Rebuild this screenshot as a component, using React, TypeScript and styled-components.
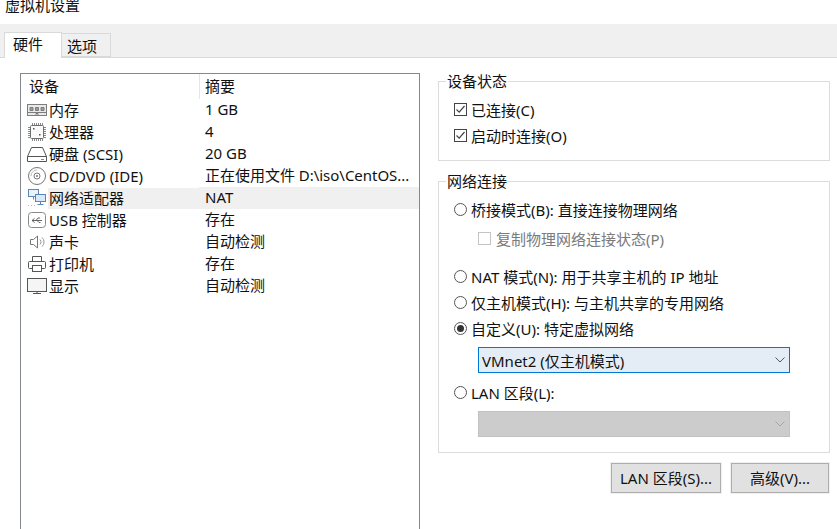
import styled, { createGlobalStyle } from 'styled-components';
import type { ReactNode } from 'react';

const GlobalStyle = createGlobalStyle`
  html, body {
    margin: 0;
    padding: 0;
    background: #fff;
  }
`;

const Page = styled.div`
  width: 837px;
  height: 529px;
  overflow: hidden;
  background: #fff;
  color: #111;
  font-family: 'Noto Sans', 'Noto Sans CJK SC', sans-serif;
  font-size: 15px;
`;

const TitleBar = styled.div`
  height: 24px;
  padding-left: 5px;
  line-height: 11px;
  overflow: hidden;
`;

const TabStrip = styled.div`
  height: 34px;
  background: #f0f0f0;
  border-bottom: 1px solid #d9d9d9;
  box-sizing: border-box;
  padding: 9px 0 0 4px;
  display: flex;
  align-items: flex-end;
`;

const Tab = styled.div<{ $active?: boolean }>`
  box-sizing: border-box;
  border: 1px solid #d9d9d9;
  width: ${({ $active }) => ($active ? '58px' : '50px')};
  height: ${({ $active }) => ($active ? '26px' : '24px')};
  padding-left: ${({ $active }) => ($active ? '8px' : '5px')};
  line-height: ${({ $active }) => ($active ? '23px' : '24px')};
  background: ${({ $active }) => ($active ? '#fff' : '#f0f0f0')};
  border-bottom: ${({ $active }) => ($active ? 'none' : '1px solid #d9d9d9')};
  margin-bottom: ${({ $active }) => ($active ? '-1px' : '0')};
  margin-left: ${({ $active }) => ($active ? '0' : '-1px')};
`;

const Body = styled.div`
  display: flex;
  padding: 15px 7px 0 20px;
  gap: 18px;
`;

const ListBox = styled.div`
  width: 400px;
  height: 480px;
  box-sizing: border-box;
  border: 1px solid #828790;
  flex-shrink: 0;
`;

const ListHead = styled.div`
  display: grid;
  grid-template-columns: 178px 1fr;
  height: 25px;
  line-height: 25px;
`;

const HeadCell = styled.div<{ $divider?: boolean }>`
  padding-left: ${({ $divider }) => ($divider ? '5px' : '8px')};
  border-left: ${({ $divider }) => ($divider ? '1px solid #e5e5e5' : 'none')};
`;

const Row = styled.div`
  display: grid;
  grid-template-columns: 178px 1fr;
  height: 22px;
  line-height: 21px;
`;

const DeviceCell = styled.div`
  display: flex;
  align-items: center;
  padding-left: 5px;
  white-space: nowrap;
`;

const DeviceName = styled.span<{ $selected?: boolean }>`
  flex: 1;
  padding-left: 1px;
  background: ${({ $selected }) => ($selected ? '#f0f0f0' : 'transparent')};
`;

const SummaryCell = styled.div<{ $selected?: boolean }>`
  padding-left: 6px;
  white-space: nowrap;
  letter-spacing: ${({ $selected }) => ($selected ? '0' : '-0.02px')};
  background: ${({ $selected }) => ($selected ? '#f0f0f0' : 'transparent')};
`;

const IconSlot = styled.svg`
  width: 22px;
  height: 20px;
  flex-shrink: 0;
`;

const Side = styled.div`
  width: 392px;
  display: flex;
  flex-direction: column;
`;

const Group = styled.fieldset<{ $height: number }>`
  margin: 0;
  padding: 0 0 0 15px;
  border: 1px solid #dcdcdc;
  height: ${({ $height }) => $height}px;
  box-sizing: border-box;
`;

const Legend = styled.legend`
  margin-left: -8px;
  padding: 0 1px;
  line-height: 20px;
  height: 20px;
`;

const StatusGroup = styled(Group)`
  margin-top: -2px;
`;

const NetworkGroup = styled(Group)`
  margin-top: 10px;
`;

const Option = styled.div<{ $disabled?: boolean; $indent?: boolean; $top?: number }>`
  display: flex;
  align-items: center;
  gap: ${({ $indent }) => ($indent ? '5px' : '4px')};
  height: 26px;
  margin-top: ${({ $top }) => $top ?? 0}px;
  margin-left: ${({ $indent }) => ($indent ? '24px' : '0')};
  color: ${({ $disabled }) => ($disabled ? '#7a7a7a' : '#111')};
  white-space: nowrap;
`;

const CheckBox = styled.span<{ $disabled?: boolean }>`
  width: 13px;
  height: 13px;
  box-sizing: border-box;
  border: 1px solid ${({ $disabled }) => ($disabled ? '#c4c4c4' : '#444')};
  display: flex;
  align-items: center;
  justify-content: center;
  flex-shrink: 0;
`;

const Radio = styled.span<{ $checked?: boolean }>`
  width: 13px;
  height: 13px;
  box-sizing: border-box;
  border: 1px solid #555;
  border-radius: 50%;
  display: flex;
  align-items: center;
  justify-content: center;
  flex-shrink: 0;
  &::after {
    content: '';
    display: ${({ $checked }) => ($checked ? 'block' : 'none')};
    width: 7px;
    height: 7px;
    border-radius: 50%;
    background: #333;
  }
`;

const Select = styled.div<{ $disabled?: boolean; $top: number }>`
  box-sizing: border-box;
  width: 312px;
  height: 26px;
  margin: ${({ $top }) => $top}px 0 0 24px;
  padding: 0 4px 0 3px;
  display: flex;
  align-items: center;
  justify-content: space-between;
  background: ${({ $disabled }) => ($disabled ? '#cccccc' : '#e4edf5')};
  border: 1px solid ${({ $disabled }) => ($disabled ? '#c2c2c2' : '#0078d7')};
`;

const Buttons = styled.div`
  display: flex;
  justify-content: flex-end;
  gap: 10px;
  margin-top: 10px;
  padding-right: 1px;
`;

const Button = styled.div<{ $width: number }>`
  box-sizing: border-box;
  width: ${({ $width }) => $width}px;
  height: 30px;
  line-height: 29px;
  text-align: center;
  white-space: nowrap;
  background: #e1e1e1;
  border: 1px solid #adadad;
  outline: 1px solid #f0f0f0;
`;

const Chevron = ({ color }: { color: string }) => (
  <svg width="10" height="6" viewBox="0 0 10 6" fill="none" stroke={color} strokeWidth="1">
    <path d="M0.5 0.5 L5 5 L9.5 0.5" />
  </svg>
);

const Tick = () => (
  <svg width="11" height="11" viewBox="0 0 11 11" fill="none" stroke="#444" strokeWidth="1.2">
    <path d="M1.5 5.5 L4.2 8.2 L9.5 2" />
  </svg>
);

const MemoryIcon = () => (
  <IconSlot viewBox="0 0 22 20" fill="none" stroke="#7d7d7d">
    <rect x="1.5" y="4.5" width="19" height="11" fill="#e9e9e9" />
    <path d="M4 7.5h3v3H4zM9.5 7.5h3v3h-3zM15 7.5h3v3h-3z" fill="#9a9a9a" />
    <path d="M1.5 12.5h19M10 15.5v-2h2v2" />
  </IconSlot>
);

const CpuIcon = () => (
  <IconSlot viewBox="0 0 22 20" fill="none" stroke="#6d6d6d">
    <rect x="4.5" y="3.5" width="13" height="13" rx="1" fill="#fafafa" />
    <path
      d="M6.5 1v2M8.5 1v2M10.5 1v2M12.5 1v2M14.5 1v2M16.5 1v2M6.5 17v2M8.5 17v2M10.5 17v2M12.5 17v2M14.5 17v2M16.5 17v2M2 5.5h2M2 7.5h2M2 9.5h2M2 11.5h2M2 13.5h2M2 15.5h2M18 5.5h2M18 7.5h2M18 9.5h2M18 11.5h2M18 13.5h2M18 15.5h2"
      stroke="#8a8a8a"
    />
    <rect x="7" y="6" width="1.5" height="1.5" fill="#555" stroke="none" />
    <rect x="13" y="12" width="1.5" height="1.5" fill="#555" stroke="none" />
  </IconSlot>
);

const DiskIcon = () => (
  <IconSlot viewBox="0 0 22 20" fill="none" stroke="#555">
    <path d="M5.5 3.5h11l4 9v5h-19v-5z" />
    <path d="M1.5 12.5h19" />
    <path d="M15 15.5h3" stroke="#888" />
  </IconSlot>
);

const DiscIcon = () => (
  <IconSlot viewBox="0 0 22 20" fill="none" stroke="#777">
    <circle cx="11" cy="10" r="8.5" />
    <circle cx="11" cy="10" r="3" />
    <circle cx="11" cy="10" r="1" fill="#777" stroke="none" />
    <path d="M5 10a6 6 0 0 1 6-6" stroke="#bbb" />
  </IconSlot>
);

const NetworkIcon = () => (
  <IconSlot viewBox="0 0 22 20" fill="none" stroke="#5a87b8">
    <rect x="2.5" y="1.5" width="10" height="7" fill="#eaf2fb" />
    <rect x="9.5" y="6.5" width="10" height="7" fill="#dbe8f6" />
    <path d="M14.5 13.5v3M11.5 16.5h6M7.5 8.5v3" />
    <path d="M2 17.5h1M5 17.5h1M8 17.5h1" stroke="#bbb" />
  </IconSlot>
);

const UsbIcon = () => (
  <IconSlot viewBox="0 0 22 20" fill="none" stroke="#8a8a8a">
    <rect x="2.5" y="2.5" width="17" height="15" rx="3" />
    <path d="M6 10.5h10M6 10.5l2.5-2M6 10.5l2.5 2M10 10.5l2-2.5h2M11 10.5l2 2h1.5" stroke="#666" />
  </IconSlot>
);

const SpeakerIcon = () => (
  <IconSlot viewBox="0 0 22 20" fill="none" stroke="#777">
    <path d="M4.5 7.5h3l4-3.5v12l-4-3.5h-3z" />
    <path d="M14 7.5a3.5 3.5 0 0 1 0 5M16 5.5a6 6 0 0 1 0 9" stroke="#999" />
  </IconSlot>
);

const PrinterIcon = () => (
  <IconSlot viewBox="0 0 22 20" fill="none" stroke="#555">
    <path d="M6.5 7.5v-5h9v5" />
    <rect x="2.5" y="7.5" width="17" height="7" rx="1" />
    <rect x="6.5" y="11.5" width="9" height="6" fill="#fff" />
  </IconSlot>
);

const DisplayIcon = () => (
  <IconSlot viewBox="0 0 22 20" fill="none" stroke="#555">
    <rect x="1.5" y="2.5" width="19" height="13" fill="#f5f5f5" />
    <path d="M7 17.5h8M11 15.5v2" />
  </IconSlot>
);

type Device = { icon: ReactNode; name: string; summary: string; selected?: boolean };

const devices: Device[] = [
  { icon: <MemoryIcon />, name: '内存', summary: '1 GB' },
  { icon: <CpuIcon />, name: '处理器', summary: '4' },
  { icon: <DiskIcon />, name: '硬盘 (SCSI)', summary: '20 GB' },
  { icon: <DiscIcon />, name: 'CD/DVD (IDE)', summary: '正在使用文件 D:\\iso\\CentOS...' },
  { icon: <NetworkIcon />, name: '网络适配器', summary: 'NAT', selected: true },
  { icon: <UsbIcon />, name: 'USB 控制器', summary: '存在' },
  { icon: <SpeakerIcon />, name: '声卡', summary: '自动检测' },
  { icon: <PrinterIcon />, name: '打印机', summary: '存在' },
  { icon: <DisplayIcon />, name: '显示', summary: '自动检测' },
];

const App = () => {
  return (
    <Page>
      <GlobalStyle />
      <TitleBar>虚拟机设置</TitleBar>
      <TabStrip>
        <Tab $active>硬件</Tab>
        <Tab>选项</Tab>
      </TabStrip>
      <Body>
        <ListBox>
          <ListHead>
            <HeadCell>设备</HeadCell>
            <HeadCell $divider>摘要</HeadCell>
          </ListHead>
          {devices.map((d) => (
            <Row key={d.name}>
              <DeviceCell>
                {d.icon}
                <DeviceName $selected={d.selected}>{d.name}</DeviceName>
              </DeviceCell>
              <SummaryCell $selected={d.selected}>{d.summary}</SummaryCell>
            </Row>
          ))}
        </ListBox>
        <Side>
          <StatusGroup $height={90}>
            <Legend>设备状态</Legend>
            <Option $top={5}>
              <CheckBox><Tick /></CheckBox>已连接(C)
            </Option>
            <Option>
              <CheckBox><Tick /></CheckBox>启动时连接(O)
            </Option>
          </StatusGroup>
          <NetworkGroup $height={282}>
            <Legend>网络连接</Legend>
            <Option $top={5}>
              <Radio />桥接模式(B): 直接连接物理网络
            </Option>
            <Option $disabled $indent $top={3}>
              <CheckBox $disabled />复制物理网络连接状态(P)
            </Option>
            <Option $top={12}>
              <Radio />NAT 模式(N): 用于共享主机的 IP 地址
            </Option>
            <Option>
              <Radio />仅主机模式(H): 与主机共享的专用网络
            </Option>
            <Option>
              <Radio $checked />自定义(U): 特定虚拟网络
            </Option>
            <Select $top={6}>
              VMnet2 (仅主机模式)
              <Chevron color="#555" />
            </Select>
            <Option $top={6}>
              <Radio />LAN 区段(L):
            </Option>
            <Select $disabled $top={6}>
              <span />
              <Chevron color="#a8a8a8" />
            </Select>
          </NetworkGroup>
          <Buttons>
            <Button $width={110}>LAN 区段(S)...</Button>
            <Button $width={98}>高级(V)...</Button>
          </Buttons>
        </Side>
      </Body>
    </Page>
  );
};

export default App;
